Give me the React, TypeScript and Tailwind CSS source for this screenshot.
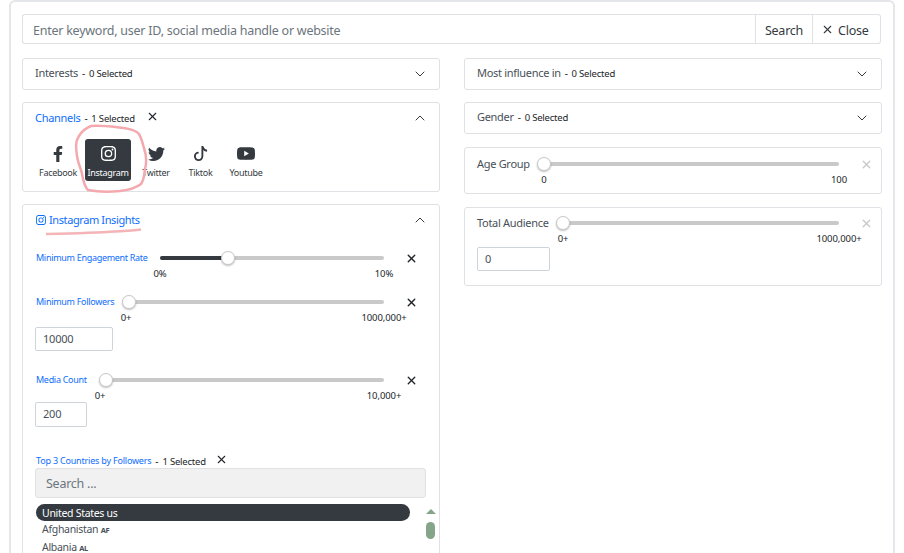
import { BsInstagram, BsTiktok, BsTwitter, BsYoutube } from "react-icons/bs";
import { FaFacebookF } from "react-icons/fa";
import { ChevronDown, ChevronUp, X } from "lucide-react";

const SelectedCount = ({ n }: { n: number }) => (
  <span className="whitespace-nowrap text-[#212529]">
    <span className="ml-[4px] text-[10px]">-</span>
    <span className="ml-[4px] text-[9.5px] tracking-[-0.2px]">{n} Selected</span>
  </span>
);

const CollapsedCard = ({ title }: { title: string }) => (
  <div className="flex h-[32px] items-center justify-between rounded-[3px] border border-[#dfe1e5] bg-white pl-[12px] pr-[11px]">
    <div className="mt-[-2px] text-[11px] tracking-[-0.3px] text-[#495057]">
      {title}
      <SelectedCount n={0} />
    </div>
    <ChevronDown size={16} strokeWidth={1.5} className="text-[#343a40]" />
  </div>
);

const Slider = ({
  label,
  min,
  max,
  percent = 0,
  labelClass,
  minClass = "",
}: {
  label: string;
  min: string;
  max: string;
  percent?: number;
  labelClass: string;
  minClass?: string;
}) => (
  <div className="flex flex-1 items-start">
    <div className={`shrink-0 whitespace-nowrap ${labelClass}`}>{label}</div>
    <div className="min-w-0 flex-1">
      <div className="relative mt-[6px] h-[4px] rounded-full bg-[#c9c9c9]">
        <div className="h-full rounded-full bg-[#343a40]" style={{ width: `${percent}%` }} />
        <div
          className="absolute top-[-5px] ml-[-7px] h-[14px] w-[14px] rounded-full border border-[#c9c9c9] bg-white shadow-[0_1px_2px_rgba(0,0,0,0.25)]"
          style={{ left: `${percent}%` }}
        />
      </div>
      <div className="mt-[7px] flex justify-between text-[9.5px] leading-[14px] tracking-[-0.1px] text-[#212529]">
        <span className={`-translate-x-1/2 ${minClass}`}>{min}</span>
        <span className="translate-x-1/2">{max}</span>
      </div>
    </div>
  </div>
);

const channels = [
  { name: "Facebook", icon: <FaFacebookF size={16} />, width: "ml-[1px] w-[44px]" },
  { name: "Instagram", icon: <BsInstagram size={15} />, width: "ml-[5px] w-[46px]" },
  { name: "Twitter", icon: <BsTwitter size={17} />, width: "w-[50px]" },
  { name: "Tiktok", icon: <BsTiktok size={15} />, width: "w-[39px]" },
  { name: "Youtube", icon: <BsYoutube size={18} />, width: "w-[52px]" },
];

const blueLabel = "pl-[1px] text-[9px] leading-[16px] tracking-[-0.3px] text-[#0d6efd]";
const grayLabel = "text-[11px] leading-[16px] tracking-[-0.3px] text-[#495057]";
const inputBox =
  "flex items-center rounded-[2px] border border-[#ced4da] pl-[7px] pt-[1px] text-[11px] tracking-[-0.2px] text-[#495057]";

export default function App() {
  return (
    <div className="h-[553px] overflow-hidden bg-white font-['Noto_Sans',sans-serif]">
      <div className="mx-[9px] h-[600px] rounded-t-[6px] border-x-2 border-t-2 border-[#e4e6e9] px-[11px] pt-[12px]">
        {/* search bar */}
        <div className="mr-[1px] flex h-[30px] text-[12.5px] tracking-[-0.25px]">
          <div className="flex flex-1 items-center rounded-l-[3px] border border-r-0 border-[#dfe1e5] pl-[10px] pt-[4px] text-[#6c757d]">
            Enter keyword, user ID, social media handle or website
          </div>
          <div className="flex w-[58px] items-center justify-center border border-[#dfe1e5] pt-[4px] text-[#343a40]">
            Search
          </div>
          <div className="flex w-[68px] items-center gap-[4px] rounded-r-[3px] border border-l-0 border-[#dfe1e5] pl-[8px] pt-[4px] text-[#343a40]">
            <X size={13} strokeWidth={2} className="mt-[-3px]" />
            Close
          </div>
        </div>

        <div className="mt-[14px] grid grid-cols-[418px_418px] gap-x-[24px]">
          {/* left column */}
          <div className="flex flex-col gap-[12px]">
            <CollapsedCard title="Interests" />

            <div className="relative h-[90px] rounded-[3px] border border-[#dfe1e5] bg-white pl-[12px] pr-[11px] pt-[7px]">
              <div className="flex items-center justify-between">
                <div className="flex items-center text-[11px] tracking-[-0.3px] text-[#0d6efd]">
                  Channels
                  <SelectedCount n={1} />
                  <X size={13} strokeWidth={2} className="ml-[11px] mt-[-3px] text-[#212529]" />
                </div>
                <ChevronUp size={16} strokeWidth={1.5} className="text-[#343a40]" />
              </div>
              <div className="mt-[12px] flex">
                {channels.map((c) => {
                  const active = c.name === "Instagram";
                  return (
                    <div
                      key={c.name}
                      className={`flex h-[42px] flex-col items-center rounded-[3px] pt-[7px] text-[9px] tracking-[-0.3px] ${c.width} ${
                        active ? "bg-[#343a40] text-white" : "text-[#343a40]"
                      }`}
                    >
                      <div className="flex h-[16px] items-center">{c.icon}</div>
                      <span className="mt-[5px] whitespace-nowrap leading-[12px]">{c.name}</span>
                    </div>
                  );
                })}
              </div>
              {/* hand drawn circle */}
              <svg className="absolute left-[51px] top-[21px]" width="76" height="70" viewBox="0 0 76 70" fill="none">
                <path
                  d="M17 2 C28 1 40 3 50 4 C56 5 62 6 65 10 C68 15 68 18 70 24 C72 30 73 38 71 45 C70 52 70 56 67 60 C62 64 54 66 46 67 C36 68 24 68 14 66 C10 62 9 56 8 50 C7 44 4 40 3 32 C2 24 1 18 5 12 C8 7 12 4 17 2 Z"
                  stroke="#f4a9ae"
                  strokeWidth="2.5"
                  strokeLinejoin="round"
                />
              </svg>
            </div>

            <div className="relative h-[400px] rounded-[3px] border border-[#dfe1e5] bg-white pl-[12px] pr-[11px] pt-[7px]">
              <div className="flex items-center justify-between">
                <div className="flex items-center gap-[3px] pl-[1px] text-[11px] tracking-[-0.4px] text-[#0d6efd]">
                  <BsInstagram size={10} />
                  Instagram Insights
                </div>
                <ChevronUp size={16} strokeWidth={1.5} className="text-[#343a40]" />
              </div>
              <svg className="absolute left-[22px] top-[23px]" width="97" height="8" viewBox="0 0 97 8" fill="none">
                <path d="M1 6 C25 5.5 50 5 70 3.5 C80 3 90 2.5 96 1.5" stroke="#f4b4b8" strokeWidth="2.5" />
              </svg>

              <div className="mt-[21px] flex items-start pr-[10px]">
                <Slider label="Minimum Engagement Rate" min="0%" max="10%" percent={30.5} labelClass={`w-[125px] ${blueLabel}`} />
                <X size={13} strokeWidth={2.5} className="ml-[21px] mt-[2px] text-[#212529]" />
              </div>

              <div className="mt-[13px] flex items-start pr-[10px]">
                <Slider label="Minimum Followers" min="0+" max="1000,000+" minClass="-ml-[3px]" labelClass={`w-[94px] ${blueLabel}`} />
                <X size={13} strokeWidth={2.5} className="ml-[21px] mt-[2px] text-[#212529]" />
              </div>
              <div className={`mt-[2px] h-[24px] w-[78px] ${inputBox}`}>10000</div>

              <div className="mt-[21px] flex items-start pr-[10px]">
                <Slider label="Media Count" min="0+" max="10,000+" minClass="-ml-[6px]" labelClass={`w-[71px] ${blueLabel}`} />
                <X size={13} strokeWidth={2.5} className="ml-[21px] mt-[2px] text-[#212529]" />
              </div>
              <div className={`mt-[-1px] h-[25px] w-[52px] ${inputBox}`}>200</div>

              <div className="mt-[27px] flex items-center pl-[1px] text-[9px] tracking-[-0.2px] text-[#0d6efd]">
                Top 3 Countries by Followers
                <SelectedCount n={1} />
                <X size={13} strokeWidth={2} className="ml-[9px] mt-[-3px] text-[#212529]" />
              </div>
              <div className="mt-[-1px] flex h-[30px] w-[391px] items-center rounded-[3px] border border-[#dfe1e5] bg-[#f1f1f1] pl-[10px] pt-[3px] text-[12.5px] tracking-[-0.25px] text-[#6c757d]">
                Search ...
              </div>
              <div className="relative mt-[6px] text-[10.5px] tracking-[-0.3px]">
                <div className="ml-[1px] flex h-[17px] w-[374px] items-center rounded-full bg-[#343a40] pl-[6px] pt-[3px] text-white">
                  United States us
                </div>
                <div className="pl-[7px] leading-[17px] text-[#495057]">
                  Afghanistan <span className="text-[7.5px] font-bold">AF</span>
                </div>
                <div className="pl-[7px] leading-[17px] text-[#495057]">
                  Albania <span className="text-[7.5px] font-bold">AL</span>
                </div>
                {/* scrollbar */}
                <div className="absolute left-[391px] top-[5px] h-0 w-0 border-x-[5px] border-b-[5px] border-x-transparent border-b-[#85a58a]" />
                <div className="absolute left-[391px] top-[18px] h-[17px] w-[9px] rounded-full bg-[#85a58a]" />
              </div>
            </div>
          </div>

          {/* right column */}
          <div className="flex flex-col items-stretch">
            <CollapsedCard title="Most influence in" />
            <div className="mt-[12px]">
              <CollapsedCard title="Gender" />
            </div>
            <div className="mt-[13px] flex h-[47px] items-start rounded-[3px] border border-[#dfe1e5] pl-[12px] pr-[8px] pt-[8px]">
              <Slider label="Age Group" min="0" max="100" labelClass={`w-[67px] ${grayLabel}`} />
              <X size={13} strokeWidth={2.5} className="ml-[21px] mt-[2px] text-[#c9c9c9]" />
            </div>
            <div className="mt-[13px] h-[79px] rounded-[3px] border border-[#dfe1e5] pl-[12px] pr-[8px] pt-[7px]">
              <div className="flex items-start">
                <Slider label="Total Audience" min="0+" max="1000,000+" labelClass={`w-[86px] ${grayLabel}`} />
                <X size={13} strokeWidth={2.5} className="ml-[21px] mt-[2px] text-[#c9c9c9]" />
              </div>
              <div className={`mt-[1px] h-[24px] w-[73px] ${inputBox}`}>0</div>
            </div>
          </div>
        </div>
      </div>
    </div>
  );
}
